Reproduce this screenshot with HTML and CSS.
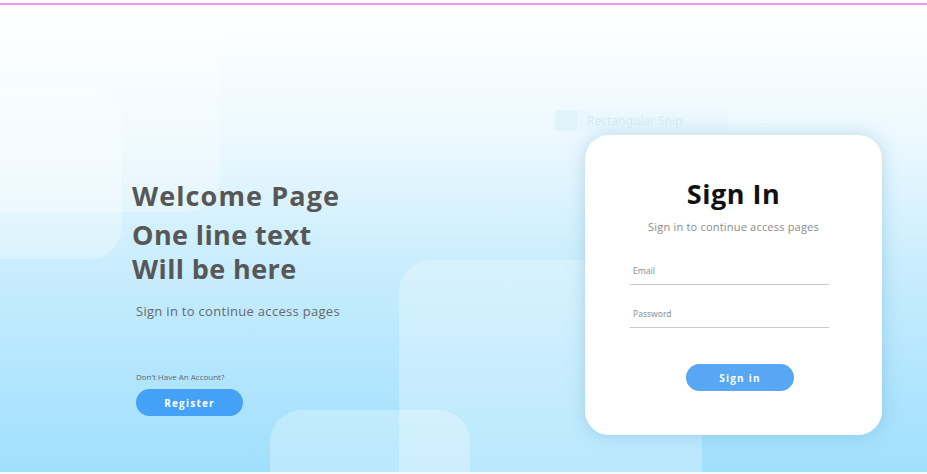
FILE: index.html
```html
<!DOCTYPE html>
<html>
<head>
<meta charset="utf-8">
<link rel="stylesheet" href="styles.css">
</head>
<body>
<div class="topline"></div>
<main class="stage">
  <div class="deco deco-a"></div>
  <div class="deco deco-b"></div>
  <div class="deco deco-c"></div>
  <div class="deco deco-d"></div>
  <div class="snip"><span class="snip-icon"></span><span class="snip-text">Rectangular Snip</span></div>

  <section class="intro">
    <h1 class="intro-title">Welcome Page</h1>
    <h2 class="intro-line">One line text<br>Will be here</h2>
    <p class="intro-sub">Sign in to continue access pages</p>
    <p class="intro-note">Don’t Have An Account?</p>
    <button class="btn btn-register">Register</button>
  </section>

  <section class="card">
    <h2 class="card-title">Sign In</h2>
    <p class="card-sub">Sign in to continue access pages</p>
    <div class="field"><span class="field-label">Email</span></div>
    <div class="field"><span class="field-label">Password</span></div>
    <button class="btn btn-signin">Sign in</button>
  </section>
</main>
<div class="bottomline"></div>
</body>
</html>
```

FILE: styles.css
```css
html, body {
  margin: 0;
  padding: 0;
}
body {
  width: 927px;
  height: 474px;
  overflow: hidden;
  background: #fafafa;
  font-family: "Open Sans", "Liberation Sans", sans-serif;
}
.topline {
  height: 3px;
  background: #ffffff;
  border-bottom: 2px solid #eb9ce9;
}
.stage {
  position: relative;
  height: 467px;
  overflow: hidden;
  display: flex;
  background: linear-gradient(to bottom, #ffffff 0px, #fbfeff 30px, #e8f7fe 150px, #c9edfd 260px, #b4e6fd 360px, #9fdffc 467px);
}
.bottomline {
  height: 2px;
  background: #f7f8f8;
}
.deco {
  position: absolute;
  background: rgba(255, 255, 255, 0.22);
  border-radius: 32px;
}
.deco-a {
  left: -120px;
  top: -60px;
  width: 340px;
  height: 267px;
  border-radius: 0 0 34px 0;
  background: rgba(255, 255, 255, 0.28);
}
.deco-b {
  left: -100px;
  top: 83px;
  width: 222px;
  height: 171px;
  background: rgba(255, 255, 255, 0.3);
}
.deco-c {
  left: 270px;
  top: 405px;
  width: 200px;
  height: 120px;
  background: rgba(255, 255, 255, 0.28);
}
.deco-d {
  left: 399px;
  top: 255px;
  width: 303px;
  height: 260px;
  background: rgba(255, 255, 255, 0.28);
}
.snip {
  position: absolute;
  left: 555px;
  top: 105px;
  width: 173px;
  height: 21px;
  display: flex;
  align-items: center;
  gap: 10px;
  background: rgba(220, 240, 250, 0.2);
}
.snip-icon {
  width: 22px;
  height: 21px;
  background: rgba(205, 230, 242, 0.25);
}
.snip-text {
  font-family: "Noto Sans", sans-serif;
  font-size: 12px;
  color: rgba(195, 218, 230, 0.45);
}

.intro {
  position: relative;
  width: 453px;
  padding-left: 132px;
  padding-top: 173px;
  box-sizing: content-box;
  color: #575757;
}
.intro-title {
  margin: 0;
  font-size: 27px;
  font-weight: 700;
  line-height: 36px;
  letter-spacing: 1.1px;
}
.intro-line {
  margin: 4px 0 0;
  font-size: 27px;
  font-weight: 700;
  line-height: 34px;
  letter-spacing: 0.4px;
}
.intro-sub {
  margin: 16px 0 0 4px;
  font-size: 13px;
  line-height: 18px;
  color: #686868;
  letter-spacing: 0.3px;
}
.intro-note {
  margin: 51px 0 0 4px;
  font-size: 8px;
  line-height: 11px;
  color: #5f6870;
}
.btn {
  border: none;
  border-radius: 14px;
  color: #ffffff;
  font-family: "Open Sans", sans-serif;
  font-weight: 700;
  font-size: 10px;
  letter-spacing: 1.2px;
  padding: 0;
  cursor: pointer;
}
.btn-register {
  display: block;
  margin: 7px 0 0 4px;
  width: 107px;
  height: 27px;
  background: #45a1f5;
}

.card {
  position: relative;
  margin-top: 130px;
  width: 297px;
  height: 300px;
  box-sizing: border-box;
  background: #ffffff;
  border-radius: 24px;
  box-shadow: 0 0 18px rgba(60, 140, 180, 0.28);
  display: flex;
  flex-direction: column;
  align-items: center;
  padding-top: 40px;
}
.card-title {
  margin: 0;
  font-size: 27px;
  font-weight: 700;
  line-height: 38px;
  color: #111111;
  letter-spacing: 0.5px;
}
.card-sub {
  margin: 7px 0 0;
  font-size: 11px;
  line-height: 14px;
  color: #8a8a8a;
  letter-spacing: 0.2px;
}
.field {
  width: 199px;
  height: 28px;
  margin-left: -8px;
  border-bottom: 1px solid #c8c8c8;
  display: flex;
  align-items: flex-end;
  box-sizing: border-box;
  padding-bottom: 7px;
}
.card-sub + .field {
  margin-top: 23px;
}
.field + .field {
  margin-top: 15px;
}
.field-label {
  font-family: "Noto Sans", sans-serif;
  font-size: 8.5px;
  line-height: 12px;
  margin-left: 3px;
  color: #8b8f94;
}
.btn-signin {
  margin-top: 36px;
  margin-left: 13px;
  width: 108px;
  height: 27px;
  background: #57a7f4;
}
```
